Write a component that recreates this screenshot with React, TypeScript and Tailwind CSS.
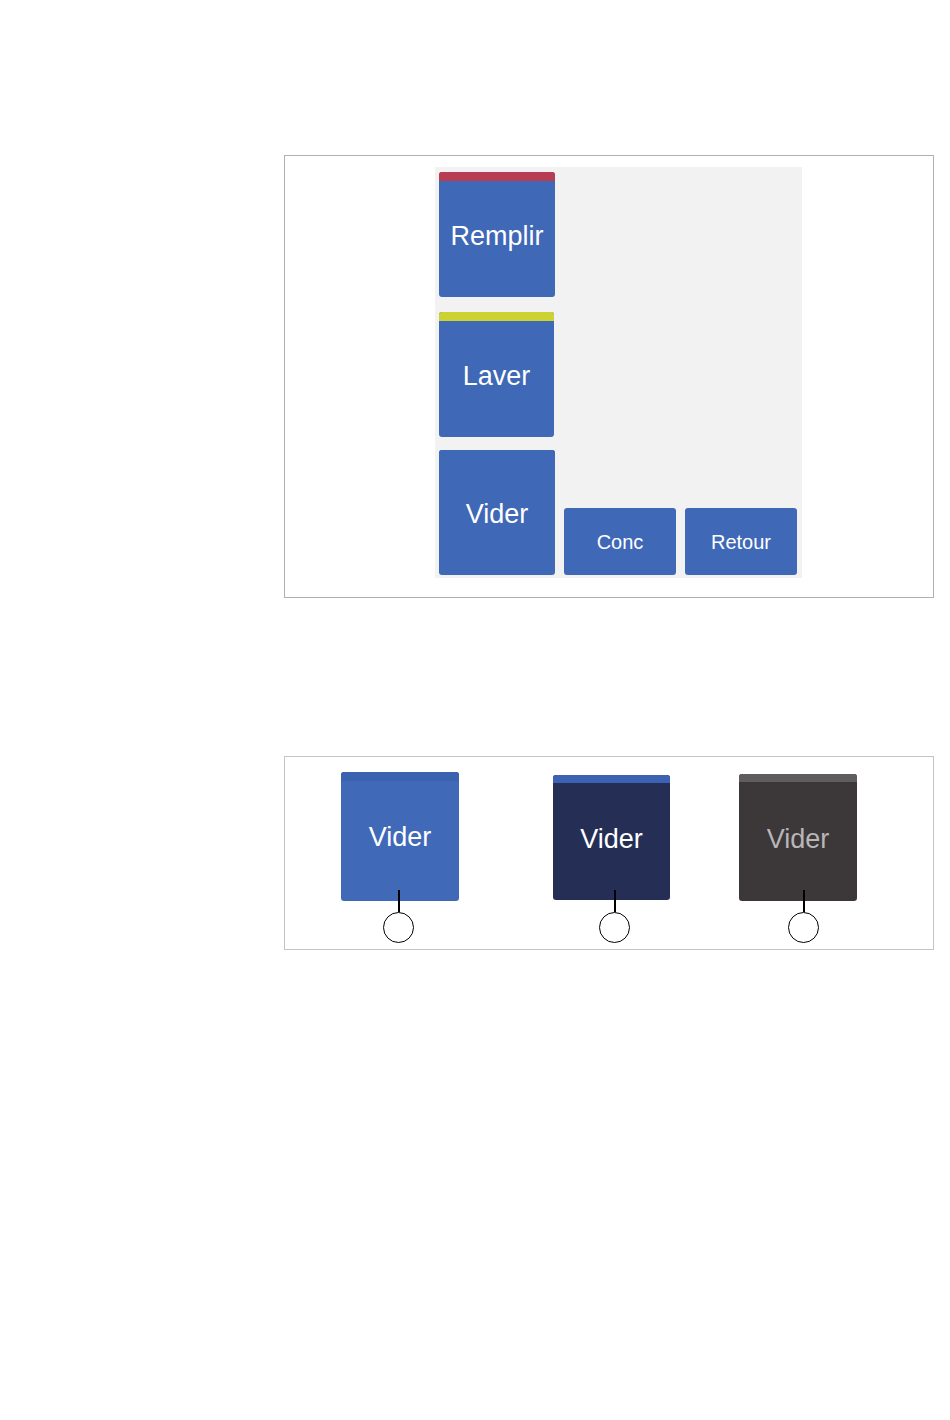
import React from "react";

const font = { fontFamily: '"Liberation Sans", Arial, sans-serif' };

function BigBtn({ label, bar, w = "w-[116px]" }: { label: string; bar?: string; w?: string }) {
  return (
    <div className={`${w} h-[125px] rounded-[3px] bg-[#3f68b7] overflow-hidden flex flex-col`}>
      <div className={`h-[9px] ${bar ?? "bg-[#3f68b7]"}`} />
      <div className="flex-1 flex items-center justify-center text-white text-[27px] leading-none pb-[5px]">
        {label}
      </div>
    </div>
  );
}

function SmallBtn({ label }: { label: string }) {
  return (
    <div className="w-[112px] h-[67px] rounded-[3px] bg-[#3f68b7] flex items-center justify-center text-white text-[20px] leading-none">
      {label}
    </div>
  );
}

export default function App() {
  return (
    <div className="w-[950px] h-[1420px] bg-white" style={font}>
      <div className="pt-[155px] pl-[284px]">
        {/* Frame 1 */}
        <div className="w-[650px] h-[443px] border border-[#b0b0b0] pt-[11px] pl-[150px]">
          <div className="w-[367px] h-[411px] bg-[#f2f2f2] flex pl-[4px] pt-[5px] pb-[3px]">
            <div className="flex flex-col">
              <BigBtn label="Remplir" bar="bg-[#b93d52]" />
              <div className="mt-[15px]">
                <BigBtn label="Laver" bar="bg-[#ccd230]" w="w-[115px]" />
              </div>
              <div className="mt-[13px]">
                <BigBtn label="Vider" />
              </div>
            </div>
            <div className="flex items-end gap-[9px] ml-[9px]">
              <SmallBtn label="Conc" />
              <SmallBtn label="Retour" />
            </div>
          </div>
        </div>

        {/* Frame 2 */}
        <div className="mt-[158px] w-[650px] h-[194px] border border-[#c4c4c4] pl-[56px] flex items-start">
          <div className="relative mt-[15px]">
            <div className="w-[118px] h-[129px] rounded-[3px] bg-[#4069b8] overflow-hidden flex flex-col">
              <div className="h-[9px] bg-[#3b62b0]" />
              <div className="flex-1 flex items-center justify-center text-white text-[27px] leading-none pb-[7px]">
                Vider
              </div>
            </div>
            <div className="absolute left-[57px] top-[118px] w-[2px] h-[22px] bg-black" />
            <div className="absolute left-[42px] top-[140px] w-[31px] h-[31px] rounded-full border-[1.5px] border-black bg-white" />
          </div>

          <div className="relative mt-[18px] ml-[94px]">
            <div className="w-[117px] h-[125px] rounded-[3px] bg-[#252f56] overflow-hidden flex flex-col">
              <div className="h-[8px] bg-[#3d62b3]" />
              <div className="flex-1 flex items-center justify-center text-white text-[27px] leading-none pb-[4px]">
                Vider
              </div>
            </div>
            <div className="absolute left-[61px] top-[115px] w-[2px] h-[22px] bg-black" />
            <div className="absolute left-[46px] top-[137px] w-[31px] h-[31px] rounded-full border-[1.5px] border-black bg-white" />
          </div>

          <div className="relative mt-[17px] ml-[69px]">
            <div className="w-[118px] h-[127px] rounded-[3px] bg-[#3c3839] overflow-hidden flex flex-col">
              <div className="h-[8px] bg-[#605d5e]" />
              <div className="flex-1 flex items-center justify-center text-[#b8b6b6] text-[27px] leading-none pb-[5px]">
                Vider
              </div>
            </div>
            <div className="absolute left-[64px] top-[116px] w-[2px] h-[22px] bg-black" />
            <div className="absolute left-[49px] top-[138px] w-[31px] h-[31px] rounded-full border-[1.5px] border-black bg-white" />
          </div>
        </div>
      </div>
    </div>
  );
}
